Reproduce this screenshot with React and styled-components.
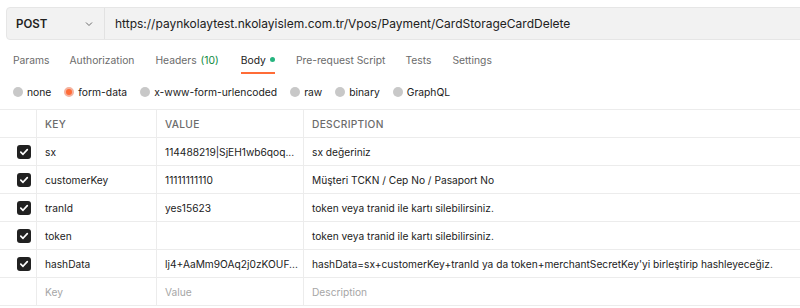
import React from 'react'
import styled, { createGlobalStyle } from 'styled-components'

const Global = createGlobalStyle`
  html, body {
    margin: 0;
    padding: 0;
    background: #fff;
    font-family: Inter, "Noto Sans", sans-serif;
    color: #212121;
    overflow: hidden;
  }
`

const Page = styled.div`
  width: 800px;
  height: 308px;
  padding-top: 7px;
  box-sizing: border-box;
`

const UrlBar = styled.div`
  display: flex;
  height: 33px;
  margin-left: 6px;
  margin-right: -6px;
  background: #f2f2f2;
  border: 1px solid #e6e6e6;
  border-radius: 4px;
  box-sizing: border-box;
`

const Method = styled.div`
  width: 98px;
  display: flex;
  align-items: center;
  justify-content: space-between;
  padding: 0 10px 0 9px;
  box-sizing: border-box;
  border-right: 1px solid #e2e2e2;
  font-size: 11.5px;
  font-weight: 600;
  color: #212121;
`

const Url = styled.div`
  display: flex;
  align-items: center;
  padding-left: 10px;
  font-size: 12px;
  color: #212121;
`

const Tabs = styled.div`
  display: flex;
  height: 27px;
  margin-top: 7px;
  padding-left: 13px;
`

const Tab = styled.div`
  position: relative;
  display: flex;
  align-items: center;
  padding-bottom: 2px;
  margin-right: ${p => p.gap}px;
  font-size: 10.3px;
  color: ${p => (p.active ? '#212121' : '#6b6b6b')};
  &::after {
    content: '';
    display: ${p => (p.active ? 'block' : 'none')};
    position: absolute;
    left: 0;
    right: 0;
    bottom: 0;
    height: 2px;
    background: #ff6c37;
  }
`

const Count = styled.span`
  color: #0e8a3e;
  margin-left: 4px;
`

const Dot = styled.span`
  width: 5px;
  height: 5px;
  border-radius: 50%;
  background: #26b47f;
  margin-left: 4px;
`

const Radios = styled.div`
  display: flex;
  align-items: center;
  height: 35px;
  padding-left: 13px;
`

const Radio = styled.div`
  display: flex;
  align-items: center;
  margin-right: 13px;
  font-size: 10.3px;
  color: #212121;
`

const Circle = styled.span`
  width: 10px;
  height: 10px;
  border-radius: 50%;
  margin-right: 4px;
  background: ${p => (p.on ? '#ff6c37' : '#c8c8c8')};
  box-sizing: border-box;
  border: ${p => (p.on ? '2.5px solid #f4b3a0' : 'none')};
`

const Table = styled.div`
  display: grid;
  grid-template-columns: 37px 120px 147px 1fr;
  border-top: 1px solid #ececec;
`

const Cell = styled.div`
  height: 28px;
  box-sizing: border-box;
  display: flex;
  align-items: center;
  padding-left: ${p => (p.check ? '0' : '8px')};
  justify-content: ${p => (p.check ? 'flex-end' : 'flex-start')};
  padding-right: ${p => (p.check ? '5px' : '0')};
  border-bottom: 1px solid #ececec;
  border-right: ${p => (p.last ? 'none' : '1px solid #ececec')};
  font-size: 10.2px;
  color: ${p => (p.muted ? '#a6a6a6' : '#212121')};
  white-space: nowrap;
  overflow: hidden;
`

const Head = styled(Cell)`
  font-weight: 500;
  color: #6b6b6b;
  letter-spacing: 0.3px;
`

const Box = styled.span`
  width: 14px;
  height: 14px;
  border-radius: 3px;
  background: #212121;
  display: flex;
  align-items: center;
  justify-content: center;
`

const Check = () => (
  <Box>
    <svg width="10" height="10" viewBox="0 0 10 10">
      <path d="M1.8 5.2 L4 7.3 L8.3 2.6" fill="none" stroke="#fff" strokeWidth="1.7" strokeLinecap="round" strokeLinejoin="round" />
    </svg>
  </Box>
)

const rows = [
  ['sx', '114488219|SjEH1wb6qoq...', 'sx değeriniz'],
  ['customerKey', '11111111110', 'Müşteri TCKN / Cep No / Pasaport No'],
  ['tranId', 'yes15623', 'token veya tranid ile kartı silebilirsiniz.'],
  ['token', '', 'token veya tranid ile kartı silebilirsiniz.'],
  ['hashData', 'lj4+AaMm9OAq2j0zKOUF...', "hashData=sx+customerKey+tranId ya da token+merchantSecretKey'yi birleştirip hashleyeceğiz."],
]

export default function App() {
  return (
    <Page>
      <Global />
      <UrlBar>
        <Method>
          POST
          <svg width="10" height="10" viewBox="0 0 10 10">
            <path d="M2 3.5 L5 6.5 L8 3.5" fill="none" stroke="#6b6b6b" strokeWidth="1" />
          </svg>
        </Method>
        <Url>https://paynkolaytest.nkolayislem.com.tr/Vpos/Payment/CardStorageCardDelete</Url>
      </UrlBar>
      <Tabs>
        <Tab gap={20}>Params</Tab>
        <Tab gap={21}>Authorization</Tab>
        <Tab gap={22}>Headers<Count>(10)</Count></Tab>
        <Tab gap={21} active>Body<Dot /></Tab>
        <Tab gap={20}>Pre-request Script</Tab>
        <Tab gap={21}>Tests</Tab>
        <Tab gap={21}>Settings</Tab>
      </Tabs>
      <Radios>
        <Radio><Circle />none</Radio>
        <Radio><Circle on />form-data</Radio>
        <Radio><Circle />x-www-form-urlencoded</Radio>
        <Radio><Circle />raw</Radio>
        <Radio><Circle />binary</Radio>
        <Radio><Circle />GraphQL</Radio>
      </Radios>
      <Table>
        <Head check />
        <Head>KEY</Head>
        <Head>VALUE</Head>
        <Head last>DESCRIPTION</Head>
        {rows.map(r => (
          <React.Fragment key={r[0]}>
            <Cell check><Check /></Cell>
            <Cell>{r[0]}</Cell>
            <Cell>{r[1]}</Cell>
            <Cell last>{r[2]}</Cell>
          </React.Fragment>
        ))}
        <Cell check />
        <Cell muted>Key</Cell>
        <Cell muted>Value</Cell>
        <Cell muted last>Description</Cell>
      </Table>
    </Page>
  )
}
